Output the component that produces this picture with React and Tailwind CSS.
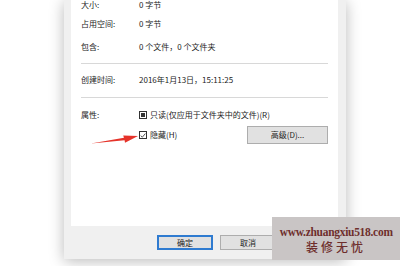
import React from "react";

const font = { fontFamily: '"Noto Sans CJK SC", "Liberation Sans", sans-serif' };

const Row = ({ label, children, className = "" }) => (
  <div className={`flex items-center h-[12px] ${className}`}>
    <div className="w-[58px] shrink-0">{label}</div>
    <div>{children}</div>
  </div>
);

const Sep = ({ className = "" }) => <div className={`h-px bg-[#d8d8d8] ${className}`}></div>;

export default function App() {
  return (
    <div
      className="relative w-[400px] h-[266px] overflow-hidden bg-white text-[8px] text-[#1c1c1c] leading-none"
      style={font}
    >
      {/* dialog */}
      <div className="ml-[64px] w-[282px] bg-[#f0f0f0] shadow-[0_2px_14px_rgba(0,0,0,0.28)]">
        <div className="ml-[7px] mr-[8px] h-[226px] bg-white px-[10px]">
          <Row label="大小:" className="-translate-y-[1px]">0 字节</Row>
          <Row label="占用空间:" className="mt-[6px]">0 字节</Row>
          <Row label="包含:" className="mt-[11px]">0 个文件，0 个文件夹</Row>
          <Sep className="mt-[10px]" />
          <Row label="创建时间:" className="mt-[10px]">2016年1月13日，15:11:25</Row>
          <Sep className="mt-[11px]" />
          <Row label="属性:" className="mt-[11px]">
            <div className="flex items-center">
              <span className="mr-[3px] flex h-[8px] w-[8px] items-center justify-center border border-[#333]">
                <span className="h-[4px] w-[4px] bg-[#333]"></span>
              </span>
              只读(仅应用于文件夹中的文件)(R)
            </div>
          </Row>
          <div className="mt-[5px] flex h-[18px] items-center">
            <div className="w-[58px] shrink-0"></div>
            <div className="flex items-center">
              <span className="mr-[3px] flex h-[8px] w-[8px] items-center justify-center border border-[#333]">
                <svg width="7" height="7" viewBox="0 0 7 7">
                  <path d="M0.8 3.6 L2.7 5.5 L6.3 1.2" fill="none" stroke="#222" strokeWidth="0.9" />
                </svg>
              </span>
              隐藏(H)
            </div>
            <div className="ml-auto flex h-[18px] w-[81px] items-center justify-center border border-[#adadad] bg-[#e1e1e1]">
              高级(D)...
            </div>
          </div>
        </div>
        {/* footer */}
        <div className="flex h-[33px] items-center gap-[7px] pl-[93px]">
          <div className="flex h-[15px] w-[56px] items-center justify-center border-2 border-[#2f7bd0] bg-[#e1e1e1]">
            确定
          </div>
          <div className="flex h-[15px] w-[56px] items-center justify-center border border-[#adadad] bg-[#e1e1e1]">
            取消
          </div>
        </div>
      </div>

      {/* red arrow */}
      <svg className="absolute left-[88px] top-[128px]" width="54" height="20" viewBox="0 0 54 20">
        <path d="M3 15.5 L36 9.8 L35.2 7.5 L50 8 L37 14.8 L36.6 12.2 Z" fill="#e5332a" />
      </svg>

      {/* watermark */}
      <div className="absolute left-[272px] top-[217px] flex h-[43px] w-[128px] flex-col items-center justify-center bg-[#c9c5c5] text-[#6e2e2c]">
        <div
          className="text-[13px] font-bold tracking-[-0.3px]"
          style={{ fontFamily: '"Liberation Serif", serif', transform: "scaleX(0.88)" }}
        >
          www.zhuangxiu518.com
        </div>
        <div className="mt-[3px] text-[12px] font-medium tracking-[3px]">装修无忧</div>
      </div>
    </div>
  );
}
